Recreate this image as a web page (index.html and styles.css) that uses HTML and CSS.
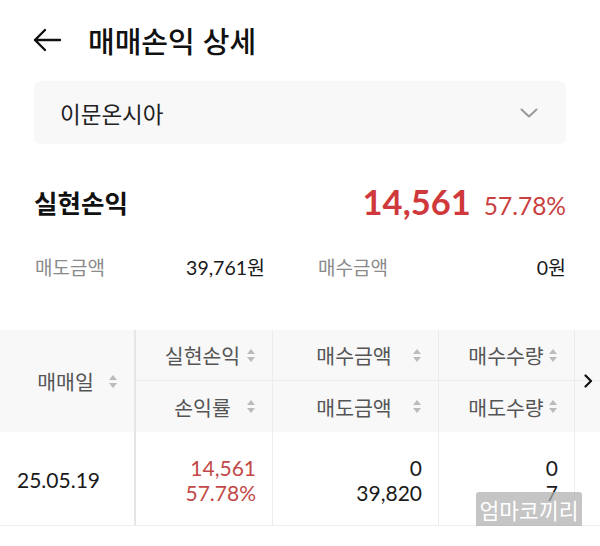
FILE: index.html
```html
<!DOCTYPE html>
<html lang="ko">
<head>
<meta charset="utf-8">
<link rel="stylesheet" href="styles.css">
</head>
<body>
<div class="page">
  <header class="topbar">
    <svg class="back" width="30" height="24" viewBox="0 0 30 24"><path d="M28 12H3M13 2L3 12l10 10" fill="none" stroke="#111" stroke-width="2.4" stroke-linecap="round" stroke-linejoin="round"/></svg>
    <h1 class="title">매매손익 상세</h1>
  </header>

  <div class="select">
    <span class="select-text">이문온시아</span>
    <svg class="chev" width="18" height="10" viewBox="0 0 18 10"><path d="M1.5 1.5L9 8.5l7.5-7" fill="none" stroke="#999" stroke-width="2" stroke-linecap="round" stroke-linejoin="round"/></svg>
  </div>

  <div class="summary">
    <span class="summary-label">실현손익</span>
    <span class="summary-val"><span class="big">14,561</span><span class="pct">57.78%</span></span>
  </div>

  <div class="info">
    <div class="info-item left"><span class="info-label">매도금액</span><span class="info-val">39,761원</span></div>
    <div class="info-item right"><span class="info-label">매수금액</span><span class="info-val">0원</span></div>
  </div>

  <div class="table">
    <div class="thead">
      <div class="th c1 span2"><span class="th-text">매매일</span><i class="sort"></i></div>
      <div class="th c2 top"><span class="th-text">실현손익</span><i class="sort"></i></div>
      <div class="th c3 top"><span class="th-text">매수금액</span><i class="sort"></i></div>
      <div class="th c4 top"><span class="th-text">매수수량</span><i class="sort"></i></div>
      <div class="th c5 top"></div>
      <div class="th c2"><span class="th-text">손익률</span><i class="sort"></i></div>
      <div class="th c3"><span class="th-text">매도금액</span><i class="sort"></i></div>
      <div class="th c4"><span class="th-text">매도수량</span><i class="sort"></i></div>
      <div class="th c5"></div>
    </div>
    <div class="trow">
      <div class="td c1 date">25.05.19</div>
      <div class="td c2 red"><span>14,561</span><span>57.78%</span></div>
      <div class="td c3"><span>0</span><span>39,820</span></div>
      <div class="td c4"><span>0</span><span>7</span></div>
      <div class="td c5"></div>
    </div>
    <svg class="more" width="10" height="14" viewBox="0 0 10 14"><path d="M2.5 1.5L8 7 2.5 12.5" fill="none" stroke="#111" stroke-width="2.2" stroke-linecap="round" stroke-linejoin="round"/></svg>
    <div class="watermark">엄마코끼리</div>
  </div>
</div>
</body>
</html>
```

FILE: styles.css
```css
* { box-sizing: border-box; margin: 0; padding: 0; }
html, body { background: #fff; }
body {
  font-family: Lato, "Noto Sans CJK KR", "Noto Sans", sans-serif;
  color: #1a1a1a;
  width: 600px;
  height: 546px;
  overflow: hidden;
}
.page { width: 600px; }

.topbar {
  height: 80px;
  display: flex;
  align-items: center;
  padding-left: 32px;
  gap: 26px;
}
.back { display: block; }
.title {
  font-family: "Noto Sans CJK KR", sans-serif;
  font-size: 29px;
  font-weight: 500;
  color: #111;
  letter-spacing: 0;
}

.select {
  margin: 1px 34px 0;
  height: 63px;
  background: #f8f8f8;
  border-radius: 7px;
  display: flex;
  align-items: center;
  justify-content: space-between;
  padding: 0 28px 0 26px;
}
.select-text {
  font-family: "Noto Sans CJK KR", sans-serif;
  font-size: 22.5px;
  color: #222;
}

.summary {
  margin: 37px 34px 0 34px;
  height: 40px;
  display: flex;
  align-items: center;
  justify-content: space-between;
}
.summary-label {
  font-family: "Noto Sans CJK KR", sans-serif;
  font-size: 25.5px;
  font-weight: 700;
  color: #111;
}
.summary-val { display: flex; align-items: baseline; gap: 13px; }
.big {
  font-size: 34.5px;
  font-weight: 700;
  color: #d0393b;
}
.pct {
  font-size: 24.5px;
  color: #c9403f;
}

.info {
  margin: 30px 34px 0 35px;
  height: 30px;
  display: flex;
  gap: 53px;
}
.info-item {
  display: flex;
  align-items: center;
  justify-content: space-between;
}
.info-item.left { width: 230px; }
.info-item.right { flex: 1; }
.info-label {
  font-family: "Noto Sans CJK KR", sans-serif;
  font-size: 19px;
  color: #8a8a8a;
}
.info-val {
  font-size: 19.5px;
  color: #1a1a1a;
}

.table {
  position: relative;
  margin-top: 49px;
  width: 600px;
  overflow: hidden;
}
.thead, .trow {
  display: grid;
  grid-template-columns: 136px 137px 166px 136px 120px;
  width: 695px;
}
.thead {
  grid-template-rows: 51px 51px;
  background: #f8f8f9;
}
.th {
  display: flex;
  align-items: center;
  padding: 0 17px 0 22px;
  border-right: 1px solid #ececec;
  font-family: "Noto Sans CJK KR", sans-serif;
  font-size: 20.5px;
  color: #555;
}
.th.top { border-bottom: 1px solid #ececec; }
.th.span2 { grid-row: span 2; }
.th.c1, .td.c1 { border-right: 2px solid #e6e6e6; }
.th.c4 { padding-left: 24px; }
.th-text { flex: 1; text-align: center; white-space: nowrap; }
.sort {
  width: 8px;
  height: 15px;
  position: relative;
  flex: none;
}
.sort::before, .sort::after {
  content: "";
  position: absolute;
  left: 0;
  border-left: 4px solid transparent;
  border-right: 4px solid transparent;
}
.sort::before { top: 1px; border-bottom: 5px solid #bbb; }
.sort::after { bottom: 1px; border-top: 5px solid #bbb; }

.trow {
  height: 94px;
  border-bottom: 1px solid #eee;
}
.td {
  display: flex;
  flex-direction: column;
  justify-content: center;
  align-items: flex-end;
  padding: 2px 16px 0 17px;
  border-right: 1px solid #ececec;
  font-size: 21px;
  line-height: 25px;
  color: #1a1a1a;
}
.td.date { align-items: flex-start; padding-left: 17px; }
.td.red { color: #c24848; }
.td.c5 { border-right: none; }

.more {
  position: absolute;
  right: 7px;
  top: 44px;
}
.watermark {
  position: absolute;
  left: 476px;
  top: 162px;
  width: 106px;
  height: 36px;
  background: rgba(175, 175, 175, 0.72);
  border-radius: 3px;
  color: #fff;
  font-family: "Noto Sans CJK KR", sans-serif;
  font-size: 21.5px;
  line-height: 36px;
  text-align: center;
  white-space: nowrap;
  overflow: hidden;
}
```
